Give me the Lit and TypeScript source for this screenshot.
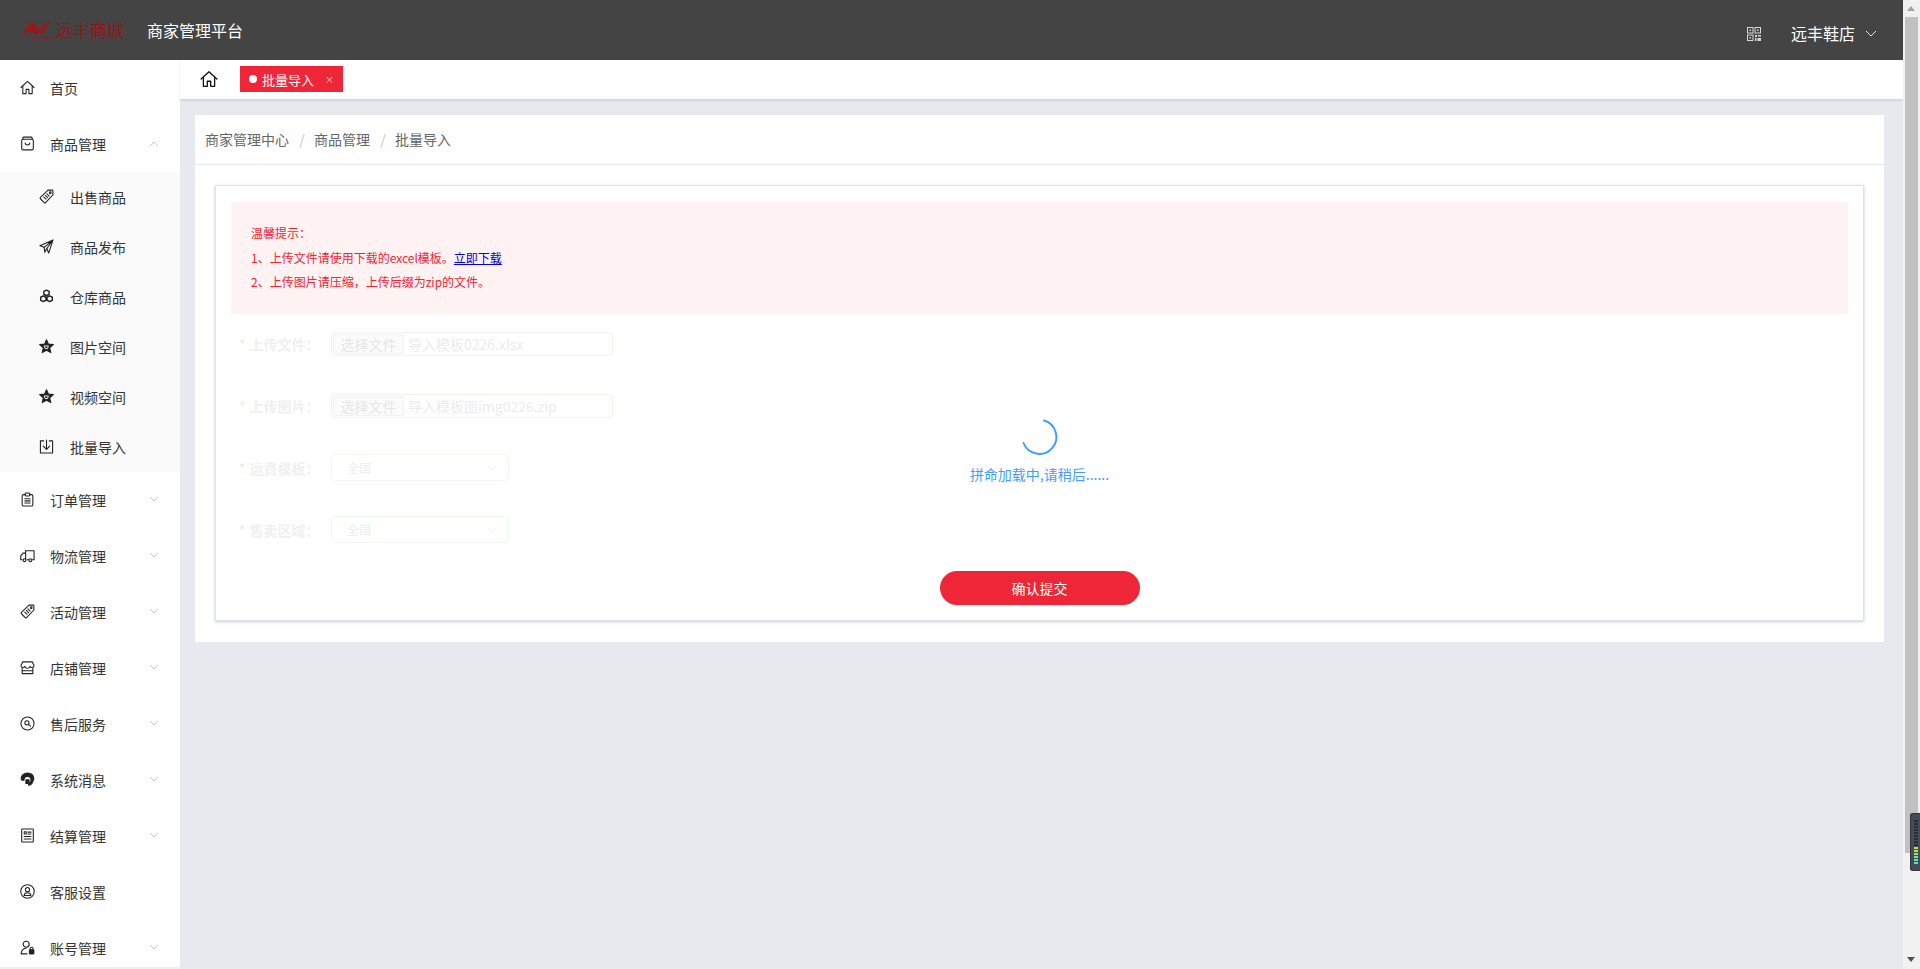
import { LitElement, html, css, svg } from "lit";
import { customElement } from "lit/decorators.js";

const s = (body: unknown, box = 16) => html`<svg class="ico" viewBox="0 0 ${box} ${box}" fill="none" stroke="currentColor" stroke-width="1.15" stroke-linecap="round" stroke-linejoin="round">${body}</svg>`;

const tagPaths = svg`<path d="M9.6 1.2h4.400a.8.8 0 0 1 .8.8v4.400L7 14.500a1 1 0 0 1-1.400 0l-4.100-4.100a1 1 0 0 1 0-1.400z"/><circle cx="12" cy="4" r=".9"/><path d="M5.100 8.600l2.300 2.300M6.800 6.900l2.300 2.300M8.500 5.200l2.300 2.300"/>`;
const starPaths = svg`<path fill="currentColor" d="M8 .8l2.100 4.700 5.200.5-3.900 3.400 1.200 5.100L8 11.900l-4.600 2.600 1.200-5.100L.7 6l5.200-.5z"/><path stroke="#fafafa" stroke-width="1" d="M6 7.400h4l-1 2.800H7z"/>`;

const icons: Record<string, unknown> = {
  home: s(svg`<path d="M1 8l7-6.500L15 8"/><path d="M3 6.600v7.900h3.500v-4.500h3v4.500H13V6.600"/>`),
  bag: s(svg`<path d="M3 3.400V2.200a1 1 0 0 1 1-1h8a1 1 0 0 1 1 1v1.200"/><rect x="1.800" y="3.400" width="12.400" height="11.400" rx="1.400"/><path d="M5.400 7.400c.4 3 4.800 3 5.200 0"/>`),
  tag: s(tagPaths),
  plane: s(svg`<path d="M15 1L1 7.200l4.500 1.700L15 1l-6.700 9.100L10.300 15z"/><path d="M5.500 8.900l.6 5.300 2.200-4.100"/>`),
  cubes: s(svg`<path d="M8 1.200l2.800 1.400v3L8 7 5.200 5.600v-3zM4.600 7.400l2.800 1.400v3.200l-2.800 1.400L1.800 12V8.800zM11.400 7.400l2.800 1.400v3.200l-2.800 1.400L8.600 12V8.800z" stroke-width="1.500"/>`),
  star: s(starPaths),
  import: s(svg`<path d="M5 2H1.500v13h13V2H11"/><path d="M8 1v10M4.600 7.600L8 11l3.400-3.400"/>`),
  order: s(svg`<path d="M5.500 2.800H3.800A1.500 1.500 0 0 0 2.300 4.300v9.200A1.500 1.500 0 0 0 3.800 15h8.400a1.500 1.500 0 0 0 1.500-1.500V4.300a1.500 1.500 0 0 0-1.500-1.500h-1.700"/><rect x="5.500" y="1" width="5" height="3.200" rx="1"/><path d="M5.200 7.200h5.600M5.200 9.500h5.600M5.200 11.800h5.600"/>`),
  truck: s(svg`<path d="M6 3h9v9.500h-2.500M9.500 12.500h-2"/><path d="M6 5.500H3.300L.8 8.500v4h1.500M6 3v9.500"/><circle cx="4.800" cy="13" r="1.500"/><circle cx="11" cy="13" r="1.500"/>`),
  shop: s(svg`<path d="M3 2h10l2 3.800a2.200 2.200 0 0 1-4.200.9 2.900 2.900 0 0 1-5.600 0A2.200 2.200 0 0 1 1 5.800z"/><path d="M2.300 8.500v6h11.400v-6M2.300 11.500h11.400"/>`),
  service: s(svg`<circle cx="8" cy="8" r="7"/><circle cx="7.400" cy="7.200" r="2.200"/><path d="M9 8.900l2.200 2"/>`),
  msg: s(svg`<path fill="currentColor" d="M8 1C4 1 1.200 3.600 1.200 6.900c0 1.100.5 1.900 1.500 1.900h1.500c0-2.300 1.500-4 3.800-4s3.800 1.700 3.800 4c0 1.900-1.100 3.100-2.600 3.800v1.600c2.900-.7 4.400-2.600 4.600-5.200h.5c.5-.3.400-1.300.4-2C14.500 3.600 12 1 8 1z"/><path fill="currentColor" d="M6.300 8.300h3.400v3.900H6.300z"/>`),
  bill: s(svg`<rect x="1.800" y="1" width="12.400" height="14" rx=".6"/><path d="M4.500 4h2.200v2.400H4.500zM8.500 4.400h3.200M8.500 6.400h3.200M4.500 9h7.200M4.500 11.800h7.200"/>`),
  person: s(svg`<circle cx="8" cy="8" r="7.200"/><circle cx="8" cy="6" r="2.200"/><path d="M4.400 12.200c.3-3.800 6.900-3.800 7.200 0z"/>`),
  account: s(svg`<circle cx="6.600" cy="4.500" r="3.200"/><path d="M1.200 14.800c.3-4 2.700-5.800 5.200-6M1.200 14.800h6.300"/><rect x="10" y="10.500" width="4.800" height="4.300" rx=".6" fill="currentColor"/><path d="M10.900 10.500V9.300a1.500 1.500 0 0 1 3 0v1.200"/>`),
};

const QR = html`<svg class="qr" viewBox="0 0 14 14" fill="none" stroke="#d8d8d8" stroke-width="1"><rect x=".5" y=".5" width="5.500" height="5.500"/><rect x="8" y=".5" width="5.500" height="5.500"/><rect x=".5" y="8" width="5.500" height="5.500"/><path fill="#d8d8d8" stroke="none" d="M2.500 2.500h1.500v1.500H2.500zM10 2.500h1.500v1.500H10zM2.500 10h1.500v1.500H2.500zM8 8h2v2H8zM11 8h3v1.500h-3zM8 11h1.500v3H8zM10.500 11H14v3h-3.500z"/></svg>`;

const chev = (cls = "") => html`<svg class="chev ${cls}" viewBox="0 0 12 7" fill="none" stroke="currentColor" stroke-width="1"><path d="M1 1l5 5 5-5"/></svg>`;

@customElement("app-root")
export class AppRoot extends LitElement {
  static styles = css`
    :host { display: grid; grid-template-columns: 1fr 17px; width: 1920px; height: 969px; overflow: hidden; position: relative; font-family: "Noto Sans CJK SC", "Noto Sans", sans-serif; font-size: 14px; color: #333; background: #e8e9ee; }
    .page { display: flex; flex-direction: column; min-width: 0; height: 969px; }
    .top { height: 60px; flex: none; background: #444; display: flex; align-items: center; color: #fff; }
    .logo { display: flex; align-items: center; margin-left: 23px; color: #981316; }
    .logo svg { width: 32px; height: 20px; }
    .logo span { font-size: 17px; line-height: 20px; margin-left: 1px; width: 68px; white-space: nowrap; }
    .title { font-size: 16px; margin-left: 23px; line-height: 24px; }
    .right { margin-left: auto; display: flex; align-items: center; margin-top: 5px; }
    .qr { width: 14px; height: 14px; margin-right: 30px; margin-top: 3px; }
    .shop { font-size: 16px; line-height: 24px; }
    .right .chev { width: 12px; height: 7px; margin-left: 10px; margin-right: 26px; margin-top: 2px; color: #d5e8f5; }

    .body { flex: 1; display: flex; min-height: 0; background: #eeeff2; }
    .side { width: 180px; flex: none; height: 907px; overflow: hidden; background: #fff; }
    .item { height: 56px; display: flex; align-items: center; padding-left: 20px; position: relative; line-height: 20px; color: #333; }
    .item .ico { width: 15px; height: 15px; margin-right: 15px; color: #222; flex: none; margin-top: -1px; }
    .item .chev { position: absolute; left: 149px; top: 24px; width: 10px; height: 6px; color: #bbb; }
    .chev.up { transform: rotate(180deg); }
    .item .chev.up { top: 25px; }
    .sub { background: #fafafa; }
    .subitem { height: 50px; display: flex; align-items: center; padding-left: 39px; line-height: 20px; color: #333; }
    .subitem .ico { width: 15px; height: 15px; margin-right: 16px; color: #222; flex: none; margin-top: -1px; }

    .main { flex: 1; min-width: 0; display: flex; flex-direction: column; background: #e8e9ee; }
    .tabs { height: 39px; flex: none; background: #fff; display: flex; align-items: flex-start; box-shadow: 0 2px 2px #d3d6dc; position: relative; }
    .tabs .ico { width: 18px; height: 18px; margin: 10px 0 0 20px; color: #111; }
    .tab { margin: 6px 0 0 22px; width: 103px; height: 26px; background: #ef2637; color: #fff; font-size: 13px; display: flex; align-items: center; padding-left: 9px; box-sizing: border-box; }
    .dot { width: 8px; height: 8px; border-radius: 50%; background: #fff; margin-right: 5px; }
    .x { font-size: 9px; margin-left: 11px; color: #fbdde0; }

    .panel { margin: 16px 19px 0 15px; background: #fff; }
    .crumb { padding-bottom: 2px; box-sizing: border-box; border-bottom: 1px solid #e6e8ec; height: 50px; display: flex; align-items: center; padding-left: 10px; color: #666; line-height: 20px; }
    .crumb i { font-style: normal; color: #c0c4cc; margin: 0 9px 0 10px; width: 6px; text-align: center; }
    .pbody { padding: 20px 20px 21px; }
    .card { position: relative; height: 436px; box-sizing: border-box; border: 1px solid #dfe2e8; box-shadow: 0 1px 3px #c8ccd4; padding: 16px 15px 0; }
    .tip { height: 112px; box-sizing: border-box; background: #fef2f2; padding: 19px 20px 0; color: #ef2637; font-size: 12px; line-height: 24.5px; }
    .tip a { color: #00e; text-decoration: underline; }
    .row { display: flex; align-items: center; padding-left: 8px; }
    .r1 { margin-top: 18px; } .r2 { margin-top: 38px; } .r3 { margin-top: 36px; } .r4 { margin-top: 35px; }
    .lab { width: 92px; flex: none; font-weight: 700; color: #f0f0f0; line-height: 20px; white-space: nowrap; }
    .lab b { color: #fde4e6; font-weight: 400; margin-right: 4px; }
    .file { width: 282px; height: 24px; box-sizing: border-box; border: 1px solid #edf5ed; border-radius: 4px; display: flex; align-items: center; color: #ececee; line-height: 20px; white-space: nowrap; }
    .file em { font-style: normal; width: 71px; height: 20px; box-sizing: border-box; margin-left: 1px; background: #fbfbfb; border: 1px solid #f1f3f1; border-radius: 3px 0 0 3px; text-align: center; line-height: 18px; margin-right: 4px; color: #e6e6e8; }
    .sel { width: 178px; height: 27px; box-sizing: border-box; border: 1px solid #eff7ef; border-radius: 4px; display: flex; align-items: center; padding-left: 15px; color: #ededee; font-size: 12px; position: relative; }
    .sel .chev { position: absolute; right: 11px; top: 10px; width: 10px; height: 6px; color: #f1f1f1; }
    .btnrow { display: flex; justify-content: center; margin-top: 28px; }
    .btn { width: 200px; height: 34px; border: none; border-radius: 17px; background: #ef2637; color: #fff; font: inherit; font-size: 14px; padding: 0; }
    .mask { position: absolute; inset: 230px 0 auto 0; display: flex; flex-direction: column; align-items: center; color: #409eff; }
    .mask svg { width: 42px; height: 42px; display: block; }
    .mask span { margin-top: 6px; line-height: 21px; font-size: 14px; }

    .bar { position: relative; background: #f1f1f1; height: 969px; }
    .thumb { position: absolute; left: 2px; width: 13px; top: 17px; height: 836px; background: #c1c1c1; }
    .arr { position: absolute; left: 4px; width: 0; height: 0; border-left: 4px solid transparent; border-right: 4px solid transparent; }
    .arr.u { top: 6px; border-bottom: 5px solid #a3a3a3; }
    .arr.d { top: 957px; border-top: 5px solid #505050; }
    .widget { position: absolute; left: 7px; top: 813px; width: 10px; height: 58px; box-sizing: border-box; background: #474b58; border-radius: 3px 0 0 3px; border: 1px solid #2f323b; border-right: none; padding: 6px 0 0 3px; display: flex; flex-direction: column; gap: 1px; }
    .widget u { display: block; width: 4px; height: 2px; flex: none; }
  `;

  private renderMeters() {
    const colors = [...Array(9).fill("#2c2e35"), "#c6e04e", "#aee25e", "#94e37e", "#7ce59a", "#66e6ae", "#55e6bb"];
    return colors.map((c) => html`<u style="background:${c}"></u>`);
  }

  render() {
    const after: [string, string, boolean][] = [
      ["订单管理", "order", true], ["物流管理", "truck", true], ["活动管理", "tag", true], ["店铺管理", "shop", true],
      ["售后服务", "service", true], ["系统消息", "msg", true], ["结算管理", "bill", true], ["客服设置", "person", false], ["账号管理", "account", true],
    ];
    const subs: [string, string][] = [["出售商品", "tag"], ["商品发布", "plane"], ["仓库商品", "cubes"], ["图片空间", "star"], ["视频空间", "star"], ["批量导入", "import"]];
    return html`
      <div class="page">
        <header class="top">
          <div class="logo">
            <svg viewBox="0 0 32 20" fill="#a01418">
              <path d="M0 12L4 8l2-2 2-5 3 3 3 5 3 4-6 2-1-3-5 0-4 2z"/>
              <path d="M14 7L28 1l-2 3-10 4zM15 9l10-3-2 3-7 2zM17 12l6-2-2 3-4 1z"/>
              <path d="M9 17.500h22v1H9z"/>
            </svg>
            <span>远丰商城</span>
          </div>
          <div class="title">商家管理平台</div>
          <div class="right">${QR}<span class="shop">远丰鞋店</span>${chev()}</div>
        </header>
        <div class="body">
          <nav class="side">
            <div class="item">${icons.home}首页</div>
            <div class="item">${icons.bag}商品管理${chev("up")}</div>
            <div class="sub">${subs.map(([t, i]) => html`<div class="subitem">${icons[i]}${t}</div>`)}</div>
            ${after.map(([t, i, c]) => html`<div class="item">${icons[i]}${t}${c ? chev() : ""}</div>`)}
          </nav>
          <main class="main">
            <div class="tabs">${icons.home}<div class="tab"><span class="dot"></span>批量导入<span class="x">×</span></div></div>
            <section class="panel">
              <div class="crumb">商家管理中心<i>/</i>商品管理<i>/</i>批量导入</div>
              <div class="pbody">
                <div class="card">
                  <div class="tip">
                    <div>温馨提示：</div>
                    <div>1、上传文件请使用下载的excel模板。<a href="#">立即下载</a></div>
                    <div>2、上传图片请压缩，上传后缀为zip的文件。</div>
                  </div>
                  <div class="row r1"><div class="lab"><b>*</b>上传文件：</div><div class="file"><em>选择文件</em>导入模板0226.xlsx</div></div>
                  <div class="row r2"><div class="lab"><b>*</b>上传图片：</div><div class="file"><em>选择文件</em>导入模板图img0226.zip</div></div>
                  <div class="row r3"><div class="lab"><b>*</b>运费模板：</div><div class="sel">全国${chev()}</div></div>
                  <div class="row r4"><div class="lab"><b>*</b>售卖区域：</div><div class="sel">全国${chev()}</div></div>
                  <div class="btnrow"><button class="btn">确认提交</button></div>
                  <div class="mask">
                    <svg viewBox="0 0 42 42" fill="none" stroke="#409eff" stroke-width="2" stroke-linecap="round"><path d="M25 4.500A17 17 0 1 1 4.500 27"/></svg>
                    <span>拼命加载中,请稍后......</span>
                  </div>
                </div>
              </div>
            </section>
          </main>
        </div>
      </div>
      <div class="bar">
        <span class="arr u"></span>
        <div class="thumb"></div>
        <span class="arr d"></span>
        <div class="widget">${this.renderMeters()}</div>
      </div>
    `;
  }
}
